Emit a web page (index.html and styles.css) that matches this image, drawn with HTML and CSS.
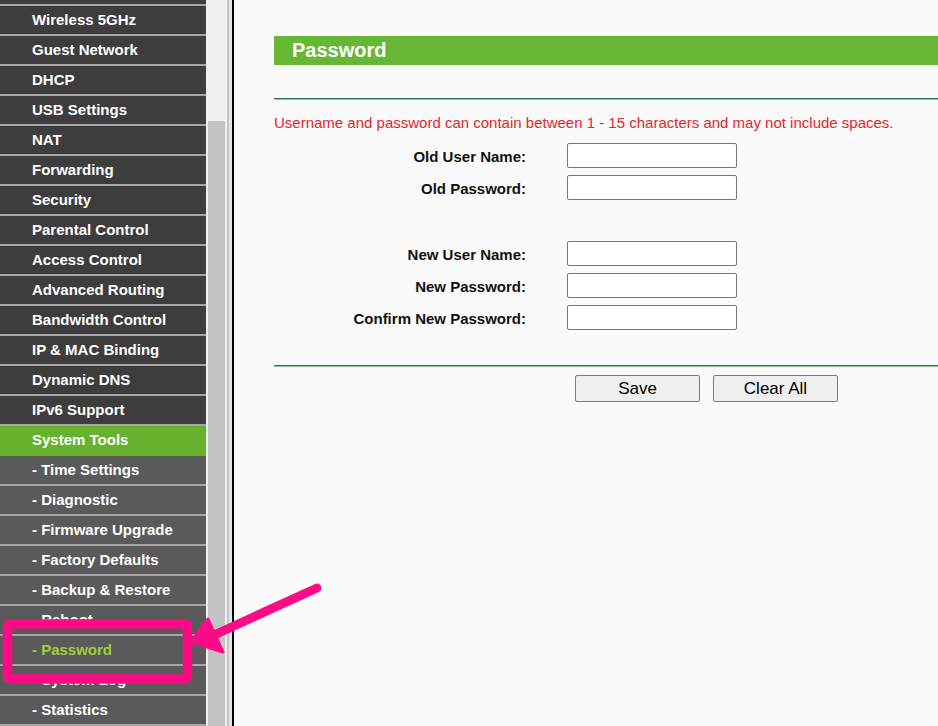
FILE: index.html
```html
<!DOCTYPE html>
<html>
<head>
<meta charset="utf-8">
<title>Password</title>
<link rel="stylesheet" href="styles.css">
</head>
<body>
<div class="page">
  <aside class="sidebar">
    <ul class="menu">
      <li class="item"></li>
      <li class="item">Wireless 5GHz</li>
      <li class="item">Guest Network</li>
      <li class="item">DHCP</li>
      <li class="item">USB Settings</li>
      <li class="item">NAT</li>
      <li class="item">Forwarding</li>
      <li class="item">Security</li>
      <li class="item">Parental Control</li>
      <li class="item">Access Control</li>
      <li class="item">Advanced Routing</li>
      <li class="item">Bandwidth Control</li>
      <li class="item">IP &amp; MAC Binding</li>
      <li class="item">Dynamic DNS</li>
      <li class="item">IPv6 Support</li>
      <li class="item active">System Tools</li>
      <li class="item sub">- Time Settings</li>
      <li class="item sub">- Diagnostic</li>
      <li class="item sub">- Firmware Upgrade</li>
      <li class="item sub">- Factory Defaults</li>
      <li class="item sub">- Backup &amp; Restore</li>
      <li class="item sub">- Reboot</li>
      <li class="item sub current">- Password</li>
      <li class="item sub">- System Log</li>
      <li class="item sub">- Statistics</li>
    </ul>
    <div class="scrollbar"><div class="thumb"></div></div>
    <div class="frame-edge"><span class="e1"></span><span class="e2"></span><span class="e3"></span></div>
  </aside>
  <main class="content">
    <div class="title-bar">Password</div>
    <div class="rule rule-top"></div>
    <p class="note">Username and password can contain between 1 - 15 characters and may not include spaces.</p>
    <div class="form">
      <div class="group">
        <label class="label">Old User Name:</label><input class="field" type="text">
        <label class="label">Old Password:</label><input class="field" type="password">
      </div>
      <div class="group group-new">
        <label class="label">New User Name:</label><input class="field" type="text">
        <label class="label">New Password:</label><input class="field" type="password">
        <label class="label">Confirm New Password:</label><input class="field" type="password">
      </div>
    </div>
    <div class="rule rule-bottom"></div>
    <div class="actions">
      <button class="btn" type="button">Save</button>
      <button class="btn" type="button">Clear All</button>
    </div>
  </main>
</div>
<svg class="annotation" width="938" height="726" viewBox="0 0 938 726">
  <rect x="7.5" y="624" width="180" height="55" rx="3" fill="none" stroke="#fd0b86" stroke-width="9.5"/>
  <line x1="317" y1="588" x2="212" y2="636" stroke="#fd0b86" stroke-width="9" stroke-linecap="round"/>
  <polygon points="191,642 208,619 223,652" fill="#fd0b86" stroke="#fd0b86" stroke-width="3" stroke-linejoin="round"/>
</svg>
</body>
</html>
```
FILE: styles.css
```css
html, body {
  margin: 0;
  padding: 0;
}
body {
  width: 938px;
  height: 726px;
  overflow: hidden;
  background: #fafafa;
  font-family: "Liberation Sans", Arial, sans-serif;
  position: relative;
}
.page {
  display: flex;
  height: 726px;
}
.sidebar {
  display: flex;
  height: 726px;
  overflow: hidden;
  flex: none;
}
.menu {
  list-style: none;
  margin: -24px 0 0 0;
  padding: 0;
  width: 206px;
  background: #3d3d3d;
}
.item {
  height: 28px;
  line-height: 27px;
  border-bottom: 2px solid #a6a6a6;
  background: #3d3d3d;
  color: #ffffff;
  font-weight: bold;
  font-size: 15px;
  padding-left: 32px;
  white-space: nowrap;
}
.item.active {
  background: #66b22f;
  border-bottom-color: #66b22f;
  height: 29px;
  border-bottom-width: 1px;
}
.item.sub {
  background: #5a5a5a;
}
.item.current {
  color: #9fcf3c;
}
.scrollbar {
  width: 21px;
  background: #f0f0f0;
  flex: none;
}
.thumb {
  margin: 121px 0 0 2px;
  width: 17px;
  height: 620px;
  background: #c3c3c3;
}
.frame-edge {
  display: flex;
  flex: none;
}
.e1 { width: 2px; background: #c4c4c4; }
.e2 { width: 3px; background: #e4e4e4; }
.e3 { width: 2px; background: #000000; }
.content {
  flex: 1;
  padding: 36px 0 0 40px;
  min-width: 0;
}
.title-bar {
  height: 29px;
  line-height: 29px;
  background: #66b834;
  color: #ffffff;
  font-weight: bold;
  font-size: 20px;
  padding-left: 18px;
}
.rule {
  height: 1px;
  background: #2a7a4c;
  border-bottom: 1px solid #8fbf9f;
}
.rule-top {
  margin-top: 33px;
}
.note {
  margin: 13px 0 0 0;
  line-height: 20px;
  font-size: 15px;
  color: #e3262a;
  white-space: nowrap;
}
.form {
  margin-top: 10px;
}
.group {
  display: grid;
  grid-template-columns: 252px 170px;
  column-gap: 41px;
  row-gap: 7px;
  align-items: center;
}
.group-new {
  margin-top: 41px;
}
.label {
  text-align: right;
  font-weight: bold;
  font-size: 15px;
  color: #111111;
  padding-top: 2px;
}
.field {
  box-sizing: border-box;
  width: 170px;
  height: 25px;
  margin: 0;
  border: 1px solid #767676;
  border-radius: 2px;
  background: #ffffff;
  padding: 0 4px;
}
.rule-bottom {
  margin-top: 35px;
}
.actions {
  display: flex;
  gap: 13px;
  margin: 8px 0 0 301px;
}
.btn {
  box-sizing: border-box;
  width: 125px;
  height: 27px;
  margin: 0;
  padding: 1px 0 0 0;
  border: 1px solid #7a7a7a;
  border-radius: 2px;
  background: #efefef;
  font-family: "Liberation Sans", Arial, sans-serif;
  font-size: 17px;
  color: #000000;
}
.annotation {
  position: absolute;
  left: 0;
  top: 0;
  pointer-events: none;
}
```
